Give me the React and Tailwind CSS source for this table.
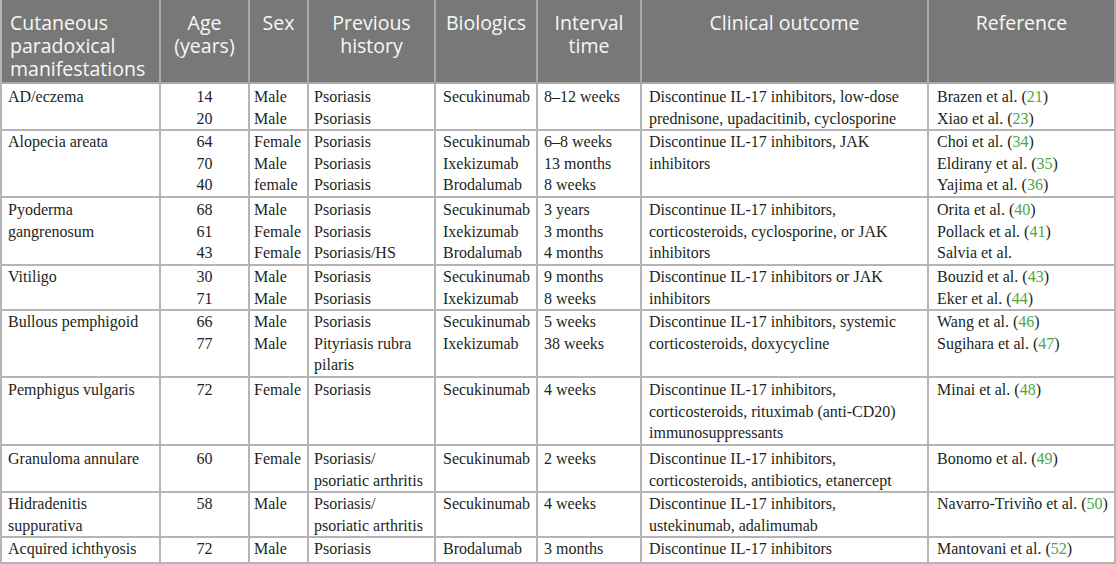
const cols =
  "grid grid-cols-[159px_89px_59px_127px_102px_104px_287px_187px]";

const rows = [
  {
    h: "h-[45px]",
    name: ["AD/eczema"],
    age: ["14", "20"],
    sex: ["Male", "Male"],
    history: ["Psoriasis", "Psoriasis"],
    bio: ["Secukinumab"],
    interval: ["8–12 weeks"],
    outcome: ["Discontinue IL-17 inhibitors, low-dose", "prednisone, upadacitinib, cyclosporine"],
    refs: [["Brazen et al.", "21"], ["Xiao et al.", "23"]],
  },
  {
    h: "h-[68px]",
    name: ["Alopecia areata"],
    age: ["64", "70", "40"],
    sex: ["Female", "Male", "female"],
    history: ["Psoriasis", "Psoriasis", "Psoriasis"],
    bio: ["Secukinumab", "Ixekizumab", "Brodalumab"],
    interval: ["6–8 weeks", "13 months", "8 weeks"],
    outcome: ["Discontinue IL-17 inhibitors, JAK", "inhibitors"],
    refs: [["Choi et al.", "34"], ["Eldirany et al.", "35"], ["Yajima et al.", "36"]],
  },
  {
    h: "h-[67px]",
    name: ["Pyoderma", "gangrenosum"],
    age: ["68", "61", "43"],
    sex: ["Male", "Female", "Female"],
    history: ["Psoriasis", "Psoriasis", "Psoriasis/HS"],
    bio: ["Secukinumab", "Ixekizumab", "Brodalumab"],
    interval: ["3 years", "3 months", "4 months"],
    outcome: ["Discontinue IL-17 inhibitors,", "corticosteroids, cyclosporine, or JAK", "inhibitors"],
    refs: [["Orita et al.", "40"], ["Pollack et al.", "41"], ["Salvia et al.", null]],
  },
  {
    h: "h-[45px]",
    name: ["Vitiligo"],
    age: ["30", "71"],
    sex: ["Male", "Male"],
    history: ["Psoriasis", "Psoriasis"],
    bio: ["Secukinumab", "Ixekizumab"],
    interval: ["9 months", "8 weeks"],
    outcome: ["Discontinue IL-17 inhibitors or JAK", "inhibitors"],
    refs: [["Bouzid et al.", "43"], ["Eker et al.", "44"]],
  },
  {
    h: "h-[68px]",
    name: ["Bullous pemphigoid"],
    age: ["66", "77"],
    sex: ["Male", "Male"],
    history: ["Psoriasis", "Pityriasis rubra", "pilaris"],
    bio: ["Secukinumab", "Ixekizumab"],
    interval: ["5 weeks", "38 weeks"],
    outcome: ["Discontinue IL-17 inhibitors, systemic", "corticosteroids, doxycycline"],
    refs: [["Wang et al.", "46"], ["Sugihara et al.", "47"]],
  },
  {
    h: "h-[69px]",
    name: ["Pemphigus vulgaris"],
    age: ["72"],
    sex: ["Female"],
    history: ["Psoriasis"],
    bio: ["Secukinumab"],
    interval: ["4 weeks"],
    outcome: ["Discontinue IL-17 inhibitors,", "corticosteroids, rituximab (anti-CD20)", "immunosuppressants"],
    refs: [["Minai et al.", "48"]],
  },
  {
    h: "h-[45px]",
    name: ["Granuloma annulare"],
    age: ["60"],
    sex: ["Female"],
    history: ["Psoriasis/", "psoriatic arthritis"],
    bio: ["Secukinumab"],
    interval: ["2 weeks"],
    outcome: ["Discontinue IL-17 inhibitors,", "corticosteroids, antibiotics, etanercept"],
    refs: [["Bonomo et al.", "49"]],
  },
  {
    h: "h-[45px]",
    name: ["Hidradenitis", "suppurativa"],
    age: ["58"],
    sex: ["Male"],
    history: ["Psoriasis/", "psoriatic arthritis"],
    bio: ["Secukinumab"],
    interval: ["4 weeks"],
    outcome: ["Discontinue IL-17 inhibitors,", "ustekinumab, adalimumab"],
    refs: [["Navarro-Triviño et al.", "50"]],
  },
  {
    h: "h-[28px]",
    name: ["Acquired ichthyosis"],
    age: ["72"],
    sex: ["Male"],
    history: ["Psoriasis"],
    bio: ["Brodalumab"],
    interval: ["3 months"],
    outcome: ["Discontinue IL-17 inhibitors"],
    refs: [["Mantovani et al.", "52"]],
  },
];

const Lines = ({ items }) =>
  items.map((t, i) => (
    <div key={i} className="whitespace-nowrap">
      {t}
    </div>
  ));

const Cell = ({ className = "", children }) => (
  <div className={`border-r-2 border-b-2 border-[#b5b5b5] pt-[2px] ${className}`}>
    {children}
  </div>
);

const Head = ({ className = "", children }) => (
  <div
    className={`border-r-2 border-b-2 border-[#a9a9a9] bg-[#787878] pt-[11px] ${className}`}
  >
    {children}
  </div>
);

export default function App() {
  return (
    <div className="w-[1116px] h-[564px] overflow-hidden bg-white border-l-2 border-[#b5b5b5]">
      <div
        className={`${cols} h-[84px] text-[19.5px] leading-[23px] text-[#f7f7f7] font-['Open_Sans',sans-serif]`}
      >
        <Head className="px-2">
          Cutaneous
          <br />
          paradoxical
          <br />
          manifestations
        </Head>
        <Head className="text-center">
          Age
          <br />
          (years)
        </Head>
        <Head className="text-center">Sex</Head>
        <Head className="text-center">
          Previous
          <br />
          history
        </Head>
        <Head className="text-center">Biologics</Head>
        <Head className="text-center">
          Interval
          <br />
          time
        </Head>
        <Head className="text-center">Clinical outcome</Head>
        <Head className="text-center">Reference</Head>
      </div>

      <div className="text-[16px] leading-[21.5px] text-[#231f20] font-['Liberation_Serif',serif]">
        {rows.map((r, i) => (
          <div key={i} className={`${cols} ${r.h}`}>
            <Cell className="pl-[6px]">
              <Lines items={r.name} />
            </Cell>
            <Cell className="text-center">
              <Lines items={r.age} />
            </Cell>
            <Cell className="pl-[4px]">
              <Lines items={r.sex} />
            </Cell>
            <Cell className="pl-[5px]">
              <Lines items={r.history} />
            </Cell>
            <Cell className="pl-[7px]">
              <Lines items={r.bio} />
            </Cell>
            <Cell className="pl-[6px]">
              <Lines items={r.interval} />
            </Cell>
            <Cell className="pl-[7px]">
              <Lines items={r.outcome} />
            </Cell>
            <Cell className="pl-[8px]">
              {r.refs.map(([n, num], j) => (
                <div key={j} className="whitespace-nowrap">
                  {n}
                  {num && (
                    <>
                      {" ("}
                      <span className="text-[#4ea543]">{num}</span>)
                    </>
                  )}
                </div>
              ))}
            </Cell>
          </div>
        ))}
      </div>
    </div>
  );
}
